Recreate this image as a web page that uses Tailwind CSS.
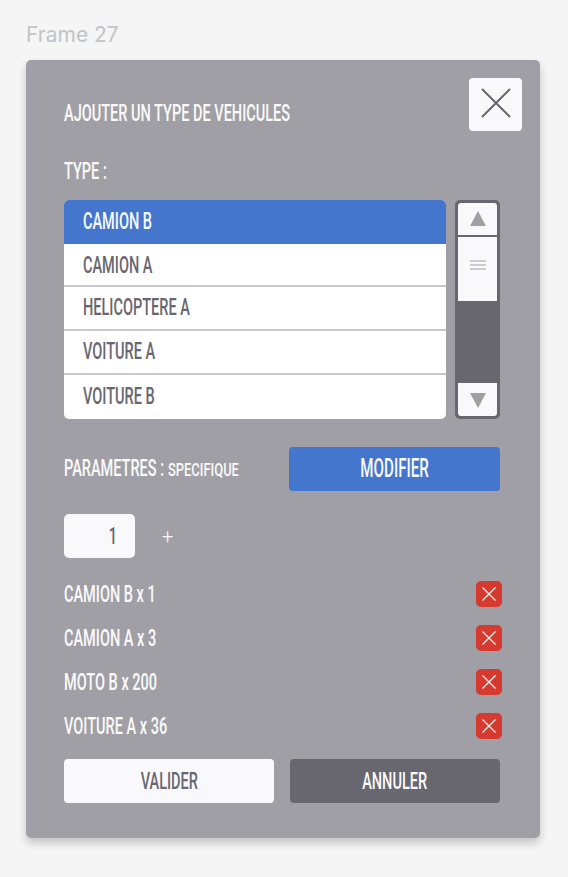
<!doctype html>
<html><head><meta charset="utf-8"><script src="https://cdn.jsdelivr.net/npm/@tailwindcss/browser@4"></script></head>
<body class="m-0 bg-[#f5f5f6] font-['Roboto',sans-serif]">
<div class="w-[568px] h-[877px] overflow-hidden pt-[22px] pl-[26px]">
  <div class="h-[38px] pt-[1px] text-[21px] leading-[24px] text-[#c4c4c6] font-['Inter',sans-serif]">Frame 27</div>
  <div class="w-[514px] h-[778px] bg-[#a09fa5] rounded-[5px] shadow-[0_5px_9px_rgba(0,0,0,0.2)] pl-[38px] pr-[40px] pt-[18px] flex flex-col font-medium">
    <div class="flex justify-between items-center h-[53px]">
      <span class="pt-[17px] text-[24px] leading-[28px] text-[#fafafa] inline-block origin-left scale-x-[0.605] whitespace-nowrap">AJOUTER UN TYPE DE VEHICULES</span>
      <button class="w-[53px] h-[53px] -mr-[22px] bg-[#f9f9fb] rounded-[4px] flex items-center justify-center pb-[3px]">
        <svg width="30" height="30" viewBox="0 0 30 30" fill="none" stroke="#68676f" stroke-width="2"><path d="M1 1L29 29M29 1L1 29"/></svg>
      </button>
    </div>
    <div class="mt-[29px] h-[22px] text-[24px] leading-[22px] text-[#fafafa] origin-left scale-x-[0.605]">TYPE :</div>
    <div class="mt-[18px] flex justify-between h-[219px]">
      <div class="w-[382px] rounded-[5px] overflow-hidden bg-white flex flex-col text-[#68676f] text-[24px]">
        <div class="h-[44px] bg-[#4476ce] text-[#fafafa] pl-[19px] pb-[2px] flex items-center"><span class="origin-left scale-x-[0.605]">CAMION B</span></div>
        <div class="h-[43px] border-b-2 border-[#c9c9cc] pl-[19px] flex items-center"><span class="origin-left scale-x-[0.605]">CAMION A</span></div>
        <div class="h-[44px] border-b-2 border-[#c9c9cc] pl-[19px] pb-[2px] flex items-center"><span class="origin-left scale-x-[0.605]">HELICOPTERE A</span></div>
        <div class="h-[44px] border-b-2 border-[#c9c9cc] pl-[19px] pb-[2px] flex items-center"><span class="origin-left scale-x-[0.605]">VOITURE A</span></div>
        <div class="flex-1 pl-[19px] pb-[2px] flex items-center"><span class="origin-left scale-x-[0.605]">VOITURE B</span></div>
      </div>
      <div class="w-[45px] rounded-[5px] bg-[#68676f] p-[3px] flex flex-col justify-between">
        <div class="flex flex-col gap-[2px]">
          <div class="h-[32px] bg-[#f9f9fb] rounded-t-[3px] flex items-center justify-center">
            <svg width="18" height="16" viewBox="0 0 18 16"><path d="M9 0L17 15H1Z" fill="#a09fa5"/></svg>
          </div>
          <div class="h-[64px] bg-[#f9f9fb] flex items-center justify-center pb-[8px]">
            <svg width="16" height="10" viewBox="0 0 16 10" stroke="#a09fa5" stroke-width="1.2"><path d="M0 1H16M0 5H16M0 9H16"/></svg>
          </div>
        </div>
        <div class="h-[33px] bg-[#f9f9fb] rounded-b-[3px] flex items-center justify-center">
          <svg width="18" height="16" viewBox="0 0 18 16"><path d="M1 1H17L9 16Z" fill="#a09fa5"/></svg>
        </div>
      </div>
    </div>
    <div class="mt-[28px] flex justify-between items-center h-[44px]">
      <div class="flex items-baseline whitespace-nowrap text-[#fafafa] w-[225px] pb-[2px]">
        <span class="text-[24px] inline-block origin-left scale-x-[0.605] w-[104px]">PARAMETRES :</span>
        <span class="text-[19px] inline-block origin-left scale-x-[0.68]">SPECIFIQUE</span>
      </div>
      <button class="w-[211px] h-[44px] bg-[#4476ce] rounded-[4px] text-[25px] text-[#fafafa]"><span class="inline-block scale-x-[0.605]">MODIFIER</span></button>
    </div>
    <div class="mt-[23px] flex items-center h-[44px]">
      <div class="w-[71px] h-[44px] bg-[#f9f9fb] rounded-[5px] flex items-center justify-end pr-[15px] text-[24px] text-[#68676f]"><span class="inline-block scale-x-[0.605]">1</span></div>
      <span class="ml-[27px] text-[20px] font-light text-[#fafafa]">+</span>
    </div>
    <div class="mt-[23px] flex flex-col gap-[18px] text-[#fafafa] text-[24px]">
      <div class="flex justify-between items-center h-[26px]"><span class="inline-block origin-left scale-x-[0.605] whitespace-nowrap">CAMION B x 1</span>
        <button class="w-[26px] h-[26px] -mr-[2px] bg-[#d63a2f] rounded-[5px] flex items-center justify-center"><svg width="14" height="14" viewBox="0 0 14 14" stroke="#fafafa" stroke-width="1.2"><path d="M0.5 0.5L13.5 13.5M13.5 0.5L0.5 13.5"/></svg></button></div>
      <div class="flex justify-between items-center h-[26px]"><span class="inline-block origin-left scale-x-[0.605] whitespace-nowrap">CAMION A x 3</span>
        <button class="w-[26px] h-[26px] -mr-[2px] bg-[#d63a2f] rounded-[5px] flex items-center justify-center"><svg width="14" height="14" viewBox="0 0 14 14" stroke="#fafafa" stroke-width="1.2"><path d="M0.5 0.5L13.5 13.5M13.5 0.5L0.5 13.5"/></svg></button></div>
      <div class="flex justify-between items-center h-[26px]"><span class="inline-block origin-left scale-x-[0.605] whitespace-nowrap">MOTO B x 200</span>
        <button class="w-[26px] h-[26px] -mr-[2px] bg-[#d63a2f] rounded-[5px] flex items-center justify-center"><svg width="14" height="14" viewBox="0 0 14 14" stroke="#fafafa" stroke-width="1.2"><path d="M0.5 0.5L13.5 13.5M13.5 0.5L0.5 13.5"/></svg></button></div>
      <div class="flex justify-between items-center h-[26px]"><span class="inline-block origin-left scale-x-[0.605] whitespace-nowrap">VOITURE A x 36</span>
        <button class="w-[26px] h-[26px] -mr-[2px] bg-[#d63a2f] rounded-[5px] flex items-center justify-center"><svg width="14" height="14" viewBox="0 0 14 14" stroke="#fafafa" stroke-width="1.2"><path d="M0.5 0.5L13.5 13.5M13.5 0.5L0.5 13.5"/></svg></button></div>
    </div>
    <div class="mt-[20px] flex justify-between">
      <button class="w-[210px] h-[44px] bg-[#f9f9fb] rounded-[4px] text-[24px] text-[#68676f]"><span class="inline-block scale-x-[0.605]">VALIDER</span></button>
      <button class="w-[210px] h-[44px] bg-[#68676f] rounded-[4px] text-[24px] text-[#fafafa]"><span class="inline-block scale-x-[0.605]">ANNULER</span></button>
    </div>
  </div>
</div>
</body></html>
